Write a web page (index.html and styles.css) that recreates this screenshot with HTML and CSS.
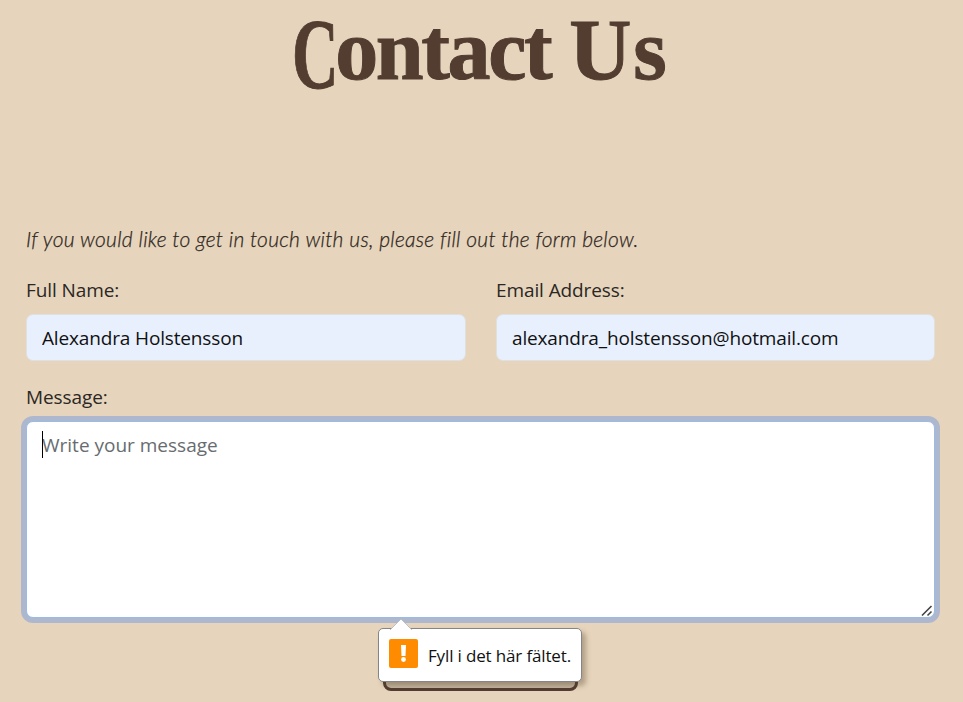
FILE: index.html
```html
<!DOCTYPE html>
<html lang="en">
<head>
<meta charset="utf-8">
<title>Contact Us</title>
<link rel="stylesheet" href="styles.css">
</head>
<body>
<main class="page">
  <h1 class="title"><span class="initial">C</span>ontact <span class="second">Us</span></h1>
  <p class="intro">If you would like to get in touch with us, please fill out the form below.</p>
  <form class="form">
    <div class="row">
      <div class="field">
        <label class="label label-name" for="name">Full Name:</label>
        <input class="input input-name" id="name" type="text" value="Alexandra Holstensson">
      </div>
      <div class="field">
        <label class="label label-email" for="email">Email Address:</label>
        <input class="input input-email" id="email" type="email" value="alexandra_holstensson@hotmail.com">
      </div>
    </div>
    <label class="label label-message" for="message">Message:</label>
    <div class="message-box">
      <textarea class="message" id="message" placeholder="Write your message"></textarea>
      <span class="caret"></span>
      <svg class="grip" width="12" height="12" viewBox="0 0 12 12"><path d="M1 10.5 10.5 1M6.5 10.5l4-4" fill="none" stroke="#444" stroke-width="1.6"/></svg>
    </div>
    <div class="actions">
      <button class="submit" type="button" aria-label="Send"></button>
      <div class="tooltip">
        <svg class="arrow" width="22" height="12" viewBox="0 0 22 12"><path d="M0 12 11 1l11 11" fill="#fff" stroke="#a9aeb8" stroke-width=".7"/></svg>
        <span class="warning"><svg width="29" height="29" viewBox="0 0 29 29"><path d="M12 6h5l-.5 11h-4z" fill="#fff"/><circle cx="14.5" cy="20.5" r="2.4" fill="#fff"/></svg></span>
        <span class="tip-text">Fyll i det här fältet.</span>
      </div>
    </div>
  </form>
</main>
</body>
</html>
```

FILE: styles.css
```css
* { box-sizing: border-box; }
body {
  margin: 0;
  height: 702px;
  overflow: hidden;
  background: #e6d5bc;
  color: #2b2724;
  font-family: "Open Sans", "Noto Sans", sans-serif;
}
.page { padding: 2px 28px 0 26px; }
.title {
  margin: 0;
  height: 222px;
  text-align: center;
  font: bold 86px/96px "Liberation Serif", serif;
  letter-spacing: -2.4px;
  color: #523d30;
  -webkit-text-stroke: 1px #523d30;
  white-space: nowrap;
}
.initial {
  display: inline-block;
  height: 96px;
  margin-right: -26px;
  font-size: 99px;
  line-height: 96px;
  vertical-align: -8px;
  transform: scaleX(.65);
  transform-origin: left;
}
.second { letter-spacing: 2px; }
.intro {
  margin: 0;
  height: 50px;
  font: italic 300 21px/30px Lato, sans-serif;
  letter-spacing: .27px;
  -webkit-text-stroke: .25px #30271f;
  color: #30271f;
  white-space: nowrap;
}
.row { display: grid; grid-template-columns: 440px 439px; gap: 30px; height: 107px; }
.field { display: flex; flex-direction: column; }
.label { display: block; height: 40px; font-size: 19px; line-height: 32px; letter-spacing: -.1px; white-space: nowrap; }
.input {
  width: 100%;
  height: 47px;
  padding: 1px 15px 0;
  border: 1px solid #e0e0df;
  border-radius: 7px;
  background: #e8f0fe;
  color: #111;
  font: 19px/30px "Open Sans", sans-serif;
  letter-spacing: -.15px;
}
.message-box { position: relative; height: 197px; }
.message {
  display: block;
  width: 909px;
  height: 197px;
  padding: 8px 15px;
  border: 1px solid #9abbe4;
  border-radius: 7px;
  outline: none;
  resize: none;
  box-shadow: 0 0 0 5px #adb8ce;
  background: #fff;
  font: 19px/30px "Open Sans", sans-serif;
}
.message::placeholder { color: #686c70; opacity: 1; }
.caret { position: absolute; left: 16px; top: 10px; width: 1px; height: 27px; background: #000; }
.grip { position: absolute; left: 895px; top: 184px; }
.actions { position: relative; height: 84px; padding: 20px 0 0 357px; }
.submit {
  display: block;
  width: 195px;
  height: 53px;
  border: 3px solid #523d30;
  border-radius: 8px;
  background: #c8b8a2;
}
.tooltip {
  position: absolute;
  left: 352px;
  top: 10px;
  display: flex;
  align-items: center;
  width: 204px;
  height: 54px;
  padding-left: 10px;
  border: 1px solid #858585;
  border-radius: 5px;
  background: #fff;
  box-shadow: 4px 4px 5px rgba(80, 60, 40, .35);
}
.arrow { position: absolute; left: 11px; top: -11px; }
.warning { width: 29px; height: 29px; margin: -3px 10px 0 0; border-radius: 2px; background: #ff8c00; }
.warning svg { display: block; }
.tip-text { color: #111; font-size: 17px; letter-spacing: -.15px; white-space: nowrap; }
```
